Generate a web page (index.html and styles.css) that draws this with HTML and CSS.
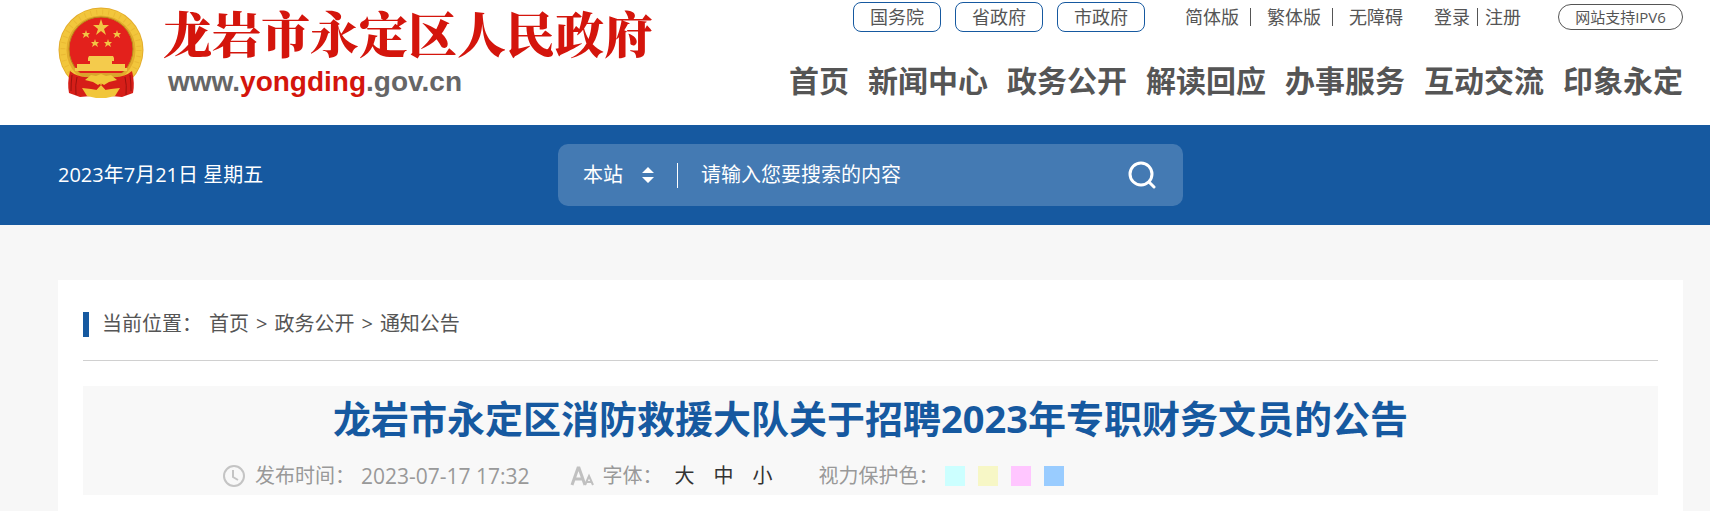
FILE: index.html
```
<!DOCTYPE html>
<html lang="zh-CN">
<head>
<meta charset="utf-8">
<title>龙岩市永定区消防救援大队关于招聘2023年专职财务文员的公告</title>
<meta name="viewport" content="width=device-width, initial-scale=1">
<link rel="stylesheet" href="styles.css">
</head>
<body>
<header class="header wrap">
	<a class="logo" href="#">
		<svg class="emblem" width="86" height="92" viewBox="0 0 86 92" aria-hidden="true">
			<circle cx="43" cy="43" r="42.500" fill="#e3ac2c"/>
			<circle cx="43" cy="43" r="38" fill="none" stroke="#f2c63c" stroke-width="7"/>
			<circle cx="43" cy="43" r="38" fill="none" stroke="#eab934" stroke-width="5" stroke-dasharray="1 5"/>
			<circle cx="43" cy="42" r="32" fill="#e3211c" stroke="#b98a1b" stroke-width="1"/>
			<path d="M43 12l2 6h6l-5 4 2 6-5-4-5 4 2-6-5-4h6z" fill="#f2c544"/>
			<path d="M28 23l1 3h3l-2 2 1 3-3-2-3 2 1-3-2-2h3zM59 23l1 3h3l-2 2 1 3-3-2-3 2 1-3-2-2h3zM37 32l1 3h3l-2 2 1 3-3-2-3 2 1-3-2-2h3zM50 32l1 3h3l-2 2 1 3-3-2-3 2 1-3-2-2h3z" fill="#f2c544"/>
			<path d="M31 49h24l1 2v3h-2v3h13v4h2v3H17v-3h2v-4h13v-3h-2v-3z" fill="#f4cb4c"/>
			<path d="M21 66h44l-4 4H25z" fill="#d9a52c"/>
			<path d="M12 64q8 7 20 6l11 8-10 11-11 1-11-4q-2-10 1-22zM74 64q-8 7-20 6l-11 8 10 11 11 1 11-4q2-10-1-22z" fill="#d61e18"/>
			<path d="M19 70q-2 8-1 18M67 70q2 8 1 18M14 68q-1 8-1 16M72 68q1 8 1 16" stroke="#9c120f" stroke-width="1" fill="none"/>
			<path d="M33 68l5 1 5-2 5 2 5-1 6 5-8 2-5 3-3-2-3 2-5-3-8-2zM24 81l9 1 6 1 4-4 4 4 6-1 9-1-5 8-9 2h-10l-9-2z" fill="#f1c63a"/>
		</svg>
		<span class="logo-text">
			<strong>龙岩市永定区人民政府</strong>
			<span class="logo-url">www.<em>yongding</em>.gov.cn</span>
		</span>
	</a>
	<div class="header-right">
		<div class="top">
			<div class="gov">
				<a href="#">国务院</a>
				<a href="#">省政府</a>
				<a href="#">市政府</a>
			</div>
			<div class="lang">
				<a href="#">简体版</a><i></i><a href="#">繁体版</a><i></i><a href="#">无障碍</a>
			</div>
			<div class="login"><a href="#">登录</a><i></i><a href="#">注册</a></div>
			<a class="ipv6" href="#">网站支持IPV6</a>
		</div>
		<nav class="nav">
			<a href="#">首页</a>
			<a href="#">新闻中心</a>
			<a href="#">政务公开</a>
			<a href="#">解读回应</a>
			<a href="#">办事服务</a>
			<a href="#">互动交流</a>
			<a href="#">印象永定</a>
		</nav>
	</div>
</header>

<div class="bar">
	<div class="bar-in wrap">
		<div class="date">2023年7月21日 星期五</div>
		<form class="search" action="#">
			<select class="site" aria-label="搜索范围">
				<option>本站</option>
				<option>站群</option>
			</select>
			<svg width="12" height="16" viewBox="0 0 12 16" aria-hidden="true"><path d="M6 0l6 6H0zM6 16l6-6H0z" fill="#fff"/></svg>
			<input class="keyword" type="text" placeholder="请输入您要搜索的内容" aria-label="搜索内容">
			<button class="search-btn" type="submit" aria-label="搜索">
				<svg width="28" height="28" viewBox="0 0 28 28" fill="none" stroke="#fff" stroke-width="3" stroke-linecap="round"><circle cx="13" cy="13" r="11"/><path d="M21 21l5 5"/></svg>
			</button>
		</form>
	</div>
</div>

<main class="main">
	<div class="position">
		<span>当前位置：</span>
		<a href="#">首页</a>&gt;<a href="#">政务公开</a>&gt;<a href="#">通知公告</a>
	</div>
	<div class="article-head">
		<h1>龙岩市永定区消防救援大队关于招聘2023年专职财务文员的公告</h1>
		<div class="info">
			<div class="pub">
				<svg width="24" height="24" viewBox="0 0 24 24" fill="none" stroke="#c4c4c4" stroke-width="2" aria-hidden="true"><circle cx="12" cy="12" r="10"/><path d="M11 6v7l5 3"/></svg>
				<span>发布时间：</span>
				<time>2023-07-17 17:32</time>
			</div>
			<div class="sizes">
				<svg width="24" height="24" viewBox="0 0 24 24" fill="none" stroke="#c0c0c0" aria-hidden="true"><path d="M2 21L8 4h1l6 17M4 15h9" stroke-width="3"/><path d="M15 21l4-9 4 9M16 18h6" stroke-width="2"/></svg>
				<span>字体：</span>
				<button type="button">大</button>
				<button type="button">中</button>
				<button type="button">小</button>
			</div>
			<div class="colors">
				<span>视力保护色：</span>
				<button type="button" class="c1" aria-label="青色"></button>
				<button type="button" class="c2" aria-label="黄色"></button>
				<button type="button" class="c3" aria-label="粉色"></button>
				<button type="button" class="c4" aria-label="蓝色"></button>
			</div>
		</div>
	</div>
</main>
</body>
</html>
```
FILE: styles.css
```
* {
	box-sizing: border-box;
}
body {
	display: flex;
	flex-direction: column;
	min-height: 100vh;
	margin: 0;
	background: #f7f7f7;
	color: #555;
	font: 20px/30px "Open Sans", "Noto Sans CJK SC", sans-serif;
}
a {
	color: inherit;
	text-decoration: none;
}
button, input, select {
	font: inherit;
	color: inherit;
	border: 0;
	padding: 0;
	background: none;
	border-radius: 0;
}
button {
	cursor: pointer;
}
.wrap {
	padding-left: 58px;
	padding-right: 27px;
}

/* header */
.header {
	display: flex;
	justify-content: space-between;
	height: 125px;
	background: #fff;
}
.logo {
	display: flex;
	gap: 19px;
	padding-top: 7px;
}
.emblem {
	flex: none;
}
.logo-text strong {
	display: block;
	color: #d4150c;
	font: 900 49px/60px "Liberation Serif", "Noto Serif CJK SC", "Noto Sans CJK SC", serif;
	white-space: nowrap;
}
.logo-url {
	display: block;
	padding-left: 5px;
	color: #666;
	font: bold 28px/30px "Liberation Sans", Arial, sans-serif;
}
.logo-url em {
	color: #d4150c;
	font-style: normal;
}
.header-right {
	display: flex;
	flex-direction: column;
	align-items: flex-end;
	white-space: nowrap;
}
.top {
	display: flex;
	align-items: center;
	height: 34px;
	font-size: 18px;
}
.gov {
	display: flex;
	gap: 14px;
	margin-right: 40px;
}
.gov a {
	width: 88px;
	line-height: 28px;
	text-align: center;
	border: 1px solid #1659a0;
	border-radius: 8px;
}
.lang, .login {
	display: flex;
	align-items: center;
}
.top i {
	width: 1px;
	height: 18px;
	background: #555;
}
.lang i {
	margin: 0 16px 0 11px;
}
.login {
	margin: 0 37px 0 31px;
}
.login i {
	margin: 0 7px;
}
.ipv6 {
	width: 125px;
	line-height: 24px;
	font-size: 15px;
	text-align: center;
	border: 1px solid #555;
	border-radius: 13px;
}
.nav {
	display: flex;
	gap: 19px;
	padding-top: 24px;
	font-size: 30px;
	font-weight: bold;
	line-height: 46px;
}

/* search bar */
.bar {
	background: #1659a0;
	color: #fff;
}
.bar-in {
	display: grid;
	grid-template-columns: 1fr 625px 1fr;
	align-items: center;
	height: 100px;
}
.search {
	display: flex;
	align-items: center;
	height: 62px;
	padding: 0 27px 0 25px;
	background: rgba(255,255,255,.2);
	border-radius: 10px;
}
.site {
	width: 59px;
	appearance: none;
}
.keyword {
	flex: 1;
	min-width: 0;
	height: 25px;
	margin-left: 23px;
	padding-left: 23px;
	border-left: 1px solid #fff;
	outline: none;
}
.keyword::placeholder {
	color: #fff;
	opacity: 1;
}
.search-btn {
	display: flex;
}

/* content */
.main {
	flex: 1;
	margin: 55px 27px 0 58px;
	padding: 0 25px;
	background: #fff;
}
.position {
	display: flex;
	align-items: center;
	gap: 7px;
	height: 81px;
	padding-top: 8px;
	border-bottom: 1px solid #d0d0d0;
}
.position::before {
	content: "";
	width: 6px;
	height: 25px;
	margin-right: 6px;
	background: #1659a0;
}
.article-head {
	margin-top: 25px;
	background: #f8f8f8;
}
h1 {
	margin: 0;
	color: #1659a0;
	font-size: 38px;
	line-height: 64px;
	text-align: center;
}
.info {
	display: flex;
	align-items: center;
	height: 45px;
	padding: 6px 0 0 139px;
	color: #999;
}
.pub, .sizes, .colors {
	display: flex;
	align-items: center;
	white-space: nowrap;
}
.info svg {
	margin-right: 9px;
}
.pub {
	margin-right: 40px;
}
.pub time {
	margin-left: 6px;
	font-size: 21px;
}
.sizes {
	margin-right: 46px;
}
.sizes span {
	margin-right: 12px;
}
.sizes button {
	margin-right: 19px;
	color: #333;
}
.sizes button:last-child {
	margin-right: 0;
}
.colors {
	gap: 13px;
}
.colors span {
	margin-right: -7px;
}
.colors button {
	width: 20px;
	height: 20px;
}
.c1 {
	background: #cff;
}
.c2 {
	background: #f7f7c6;
}
.c3 {
	background: #ffc6ff;
}
.c4 {
	background: #9cf;
}
```
